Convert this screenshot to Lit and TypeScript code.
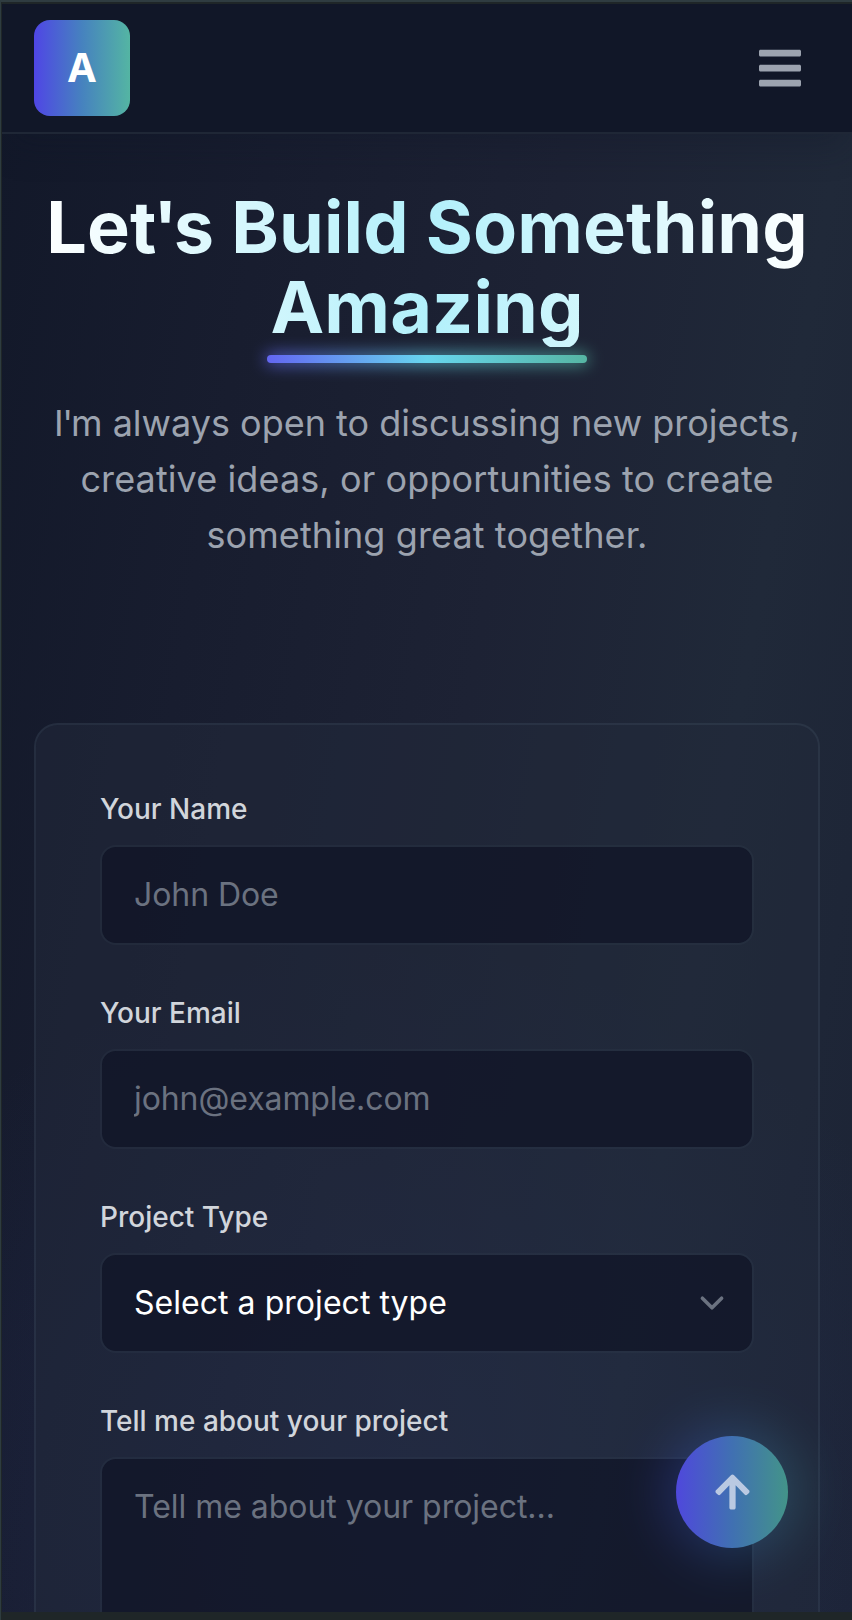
import { LitElement, html, css, svg } from "lit";
import { customElement, property } from "lit/decorators.js";

const barsIcon = svg`<path d="M16 132h416c8.837 0 16-7.163 16-16V76c0-8.837-7.163-16-16-16H16C7.163 60 0 67.163 0 76v40c0 8.837 7.163 16 16 16zm0 160h416c8.837 0 16-7.163 16-16v-40c0-8.837-7.163-16-16-16H16c-8.837 0-16 7.163-16 16v40c0 8.837 7.163 16 16 16zm0 160h416c8.837 0 16-7.163 16-16v-40c0-8.837-7.163-16-16-16H16c-8.837 0-16 7.163-16 16v40c0 8.837 7.163 16 16 16z"/>`;

const arrowIcon = svg`<path d="M34.9 289.5l-22.2-22.2c-9.4-9.4-9.4-24.6 0-33.9L207 39c9.4-9.4 24.6-9.4 33.9 0l194.3 194.3c9.4 9.4 9.4 24.6 0 33.9L413 289.4c-9.5 9.5-25 9.3-34.3-.4L264 168.6V456c0 13.3-10.7 24-24 24h-32c-13.3 0-24-10.7-24-24V168.6L69.2 289.1c-9.3 9.8-24.8 10-34.3.4z"/>`;

@customElement("form-field")
class FormField extends LitElement {
  @property() label = "";
  @property() hint = "";
  @property() kind = "text";

  static styles = css`
    :host { display: block; }
    .label { display: block; height: 40px; line-height: 40px; margin-bottom: 16px; font-size: 28px; font-weight: 500; color: #d1d5db; }
    .control { display: block; box-sizing: border-box; width: 100%; height: 100px; margin: 0; padding: 0 32px 2px; border: 2px solid rgba(55, 69, 86, 0.2); border-radius: 16px; background: rgba(15, 20, 37, 0.72); background-clip: padding-box; color: #fff; font: 400 32px/48px Inter, sans-serif; font-optical-sizing: none; letter-spacing: -0.08px; outline: none; appearance: none; resize: none; }
    .control::placeholder { color: #6b7280; opacity: 1; }
    .area { height: 320px; padding: 24px 32px; letter-spacing: -0.03px; }
    .pick { padding-bottom: 0; letter-spacing: 0.04px; }
    .wrap { display: grid; align-items: center; }
    .wrap > * { grid-area: 1 / 1; }
    .chevron { width: 48px; height: 48px; justify-self: end; margin-right: 18px; fill: none; stroke: #6b7280; stroke-width: 1.5; stroke-linecap: round; stroke-linejoin: round; pointer-events: none; }
  `;

  private control() {
    if (this.kind === "select") {
      return html`<div class="wrap">
        <select class="control pick"><option>${this.hint}</option></select>
        <svg class="chevron" viewBox="0 0 20 20"><path d="M6 8l4 4 4-4" /></svg>
      </div>`;
    }
    if (this.kind === "area") {
      return html`<textarea class="control area" placeholder=${this.hint}></textarea>`;
    }
    return html`<input class="control" type=${this.kind} placeholder=${this.hint} />`;
  }

  render() {
    return html`<label class="label">${this.label}</label>${this.control()}`;
  }
}

@customElement("app-root")
class AppRoot extends LitElement {
  static styles = css`
    :host { display: block; position: relative; box-sizing: border-box; width: 852px; height: 1620px; overflow: hidden; border-top: 2px solid #2f3c41; border-left: 1px solid #2e3c3f; background: #1f2628; font-family: Inter, sans-serif; font-optical-sizing: none; }
    .page { height: 1608px; box-sizing: border-box; margin: 2px 0 0 1px; overflow: hidden; isolation: isolate;
      background:
        radial-gradient(ellipse 600px 540px at 390px 1480px, rgba(58, 76, 172, 0.16), transparent),
        linear-gradient(100deg, #121829 0%, #181d2f 26%, #1d2234 52%, #202939 76%, #1c2335 100%); }
    .header { display: flex; align-items: center; justify-content: space-between; box-sizing: border-box; height: 130px; padding: 0 51px 0 32px; border-bottom: 2px solid #1f2736; background: #111728; box-shadow: 0 20px 30px -6px rgba(17, 24, 39, 0.3); }
    .logo { display: grid; place-items: center; width: 96px; height: 96px; border-radius: 16px; background: linear-gradient(90deg, #4f46e5, #4682bf 50%, #54b5a3); color: #fff; font-size: 40px; font-weight: 700; line-height: 56px; }
    .bars { width: 42px; height: 48px; fill: #9ca3af; }
    .hero { display: flex; flex-direction: column; align-items: center; padding: 53px 32px 0; text-align: center; }
    .title { margin: 0; width: 786px; font-size: 72px; line-height: 80px; font-weight: 700; letter-spacing: 0.1px; color: transparent; background: linear-gradient(90deg, #fff, #b2f0fb, #fff); -webkit-background-clip: text; background-clip: text; }
    .tight { margin-left: -0.045em; letter-spacing: -0.055em; }
    .rule { position: relative; width: 320px; height: 8px; margin-top: 8px; border-radius: 4px; background: linear-gradient(90deg, #6366f1, #67d6ee 50%, #56b5a3); }
    .rule::before { content: ""; position: absolute; inset: -2px; z-index: -1; border-radius: 6px; background: linear-gradient(90deg, #6366f1, #67d6ee 50%, #56b5a3); filter: blur(8px); opacity: 0.7; }
    .lead { margin: 32px 0 0; font-size: 36px; line-height: 56px; color: #9ca3af; }
    .loose { letter-spacing: 0.1px; }
    .card { display: flex; flex-direction: column; gap: 48px; box-sizing: border-box; height: 1000px; margin: 160px 32px 0; padding: 64px; border: 2px solid rgba(55, 69, 86, 0.45); border-radius: 24px; background: rgba(35, 42, 60, 0.52); background-clip: padding-box; }
    .dock { position: absolute; left: 675px; top: 1434px; isolation: isolate; width: 112px; height: 112px; }
    .dock::before { content: ""; position: absolute; inset: -10px; z-index: -1; border-radius: 50%; background: linear-gradient(90deg, #4046e0, #3b78c0, #419a95); filter: blur(26px); opacity: 0.32; }
    .top { display: grid; place-items: center; width: 112px; height: 112px; padding: 0; border: 0; border-radius: 50%; background: linear-gradient(90deg, #4f48dc, #4070b2 50%, #439489); }
    .arrow { width: 35px; height: 40px; fill: #bac9e2; }
  `;

  render() {
    return html`
      <div class="page">
        <header class="header">
          <div class="logo">A</div>
          <svg class="bars" viewBox="0 0 448 512">${barsIcon}</svg>
        </header>
        <section class="hero">
          <h1 class="title">Let<span class="tight">'</span>s Build Something Amazing</h1>
          <div class="rule"></div>
          <p class="lead">I<span class="tight">'</span>m always open to discussing new projects, <span class="loose">creative ideas, or opportunities to create something great together.</span></p>
        </section>
        <form class="card">
          <form-field label="Your Name" hint="John Doe"></form-field>
          <form-field label="Your Email" hint="john@example.com" kind="email"></form-field>
          <form-field label="Project Type" hint="Select a project type" kind="select"></form-field>
          <form-field label="Tell me about your project" hint="Tell me about your project..." kind="area"></form-field>
        </form>
      </div>
      <div class="dock">
        <button class="top" type="button" aria-label="Back to top">
          <svg class="arrow" viewBox="0 0 448 512">${arrowIcon}</svg>
        </button>
      </div>
    `;
  }
}
